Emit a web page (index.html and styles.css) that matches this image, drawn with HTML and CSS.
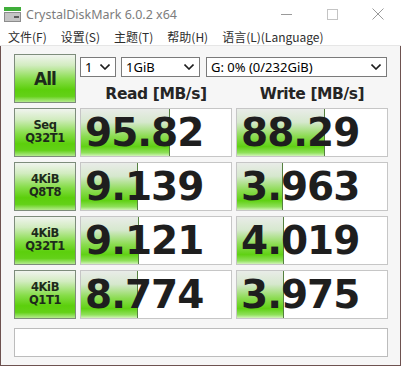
FILE: index.html
```html
<!DOCTYPE html>
<html>
<head>
  <meta charset="utf-8">
  <title>CrystalDiskMark 6.0.2 x64</title>
  <link rel="stylesheet" href="styles.css">
</head>
<body>
<div class="window">
  <div class="titlebar">
    <svg class="app-icon" width="17" height="15" viewBox="0 0 17 15">
      <rect x="0" y="0" width="17" height="4" fill="#3fae3a"/>
      <rect x="0" y="5" width="17" height="10" fill="#8c8c8c"/>
      <rect x="1" y="6" width="15" height="8" fill="#c4c4c4"/>
      <rect x="10" y="9" width="5" height="2" fill="#5c5c5c"/>
    </svg>
    <span class="title">CrystalDiskMark 6.0.2 x64</span>
    <div class="controls">
      <span class="ctl"><svg width="11" height="11" viewBox="0 0 11 11"><path d="M0 5.5 H11" stroke="#9a9a9a" stroke-width="1"/></svg></span>
      <span class="ctl"><svg width="11" height="11" viewBox="0 0 11 11"><rect x="0.5" y="0.5" width="10" height="10" fill="none" stroke="#c4c4c4" stroke-width="1"/></svg></span>
      <span class="ctl"><svg width="12" height="12" viewBox="0 0 12 12"><path d="M0.5 0.5 L11.5 11.5 M11.5 0.5 L0.5 11.5" stroke="#9a9a9a" stroke-width="1"/></svg></span>
    </div>
  </div>

  <div class="menubar">
    <span>文件(F)</span>
    <span>设置(S)</span>
    <span>主题(T)</span>
    <span>帮助(H)</span>
    <span>语言(L)(Language)</span>
  </div>

  <div class="content">
    <div class="grid">
      <button class="all">All</button>
      <div class="top">
        <div class="selects">
          <div class="select s-count">1 <svg width="10" height="6" viewBox="0 0 10 6"><path d="M0.5 0.5 L5 5 L9.5 0.5" fill="none" stroke="#1e1e1e" stroke-width="1.6"/></svg></div>
          <div class="select s-size">1GiB <svg width="10" height="6" viewBox="0 0 10 6"><path d="M0.5 0.5 L5 5 L9.5 0.5" fill="none" stroke="#1e1e1e" stroke-width="1.6"/></svg></div>
          <div class="select s-drive">G: 0% (0/232GiB) <svg width="10" height="6" viewBox="0 0 10 6"><path d="M0.5 0.5 L5 5 L9.5 0.5" fill="none" stroke="#1e1e1e" stroke-width="1.6"/></svg></div>
        </div>
        <div class="heads">
          <span>Read [MB/s]</span>
          <span>Write [MB/s]</span>
        </div>
      </div>

      <div class="label">Seq<br>Q32T1</div>
      <div class="cell"><div class="bar" style="width:58.7%"></div><span class="num">95.82</span></div>
      <div class="cell"><div class="bar" style="width:58%"></div><span class="num">88.29</span></div>

      <div class="label">4KiB<br>Q8T8</div>
      <div class="cell"><div class="bar" style="width:37.3%"></div><span class="num">9.139</span></div>
      <div class="cell"><div class="bar" style="width:30%"></div><span class="num">3.963</span></div>

      <div class="label">4KiB<br>Q32T1</div>
      <div class="cell"><div class="bar" style="width:38%"></div><span class="num">9.121</span></div>
      <div class="cell"><div class="bar" style="width:30.7%"></div><span class="num">4.019</span></div>

      <div class="label">4KiB<br>Q1T1</div>
      <div class="cell"><div class="bar" style="width:37.3%"></div><span class="num">8.774</span></div>
      <div class="cell"><div class="bar" style="width:30.7%"></div><span class="num">3.975</span></div>
    </div>
    <div class="comment"></div>
  </div>
</div>
</body>
</html>
```

FILE: styles.css
```css
body { margin: 0; background: #fff; font-family: "Noto Sans", sans-serif; }

.window { width: 401px; }

.titlebar { display: flex; align-items: center; height: 28px; }
.app-icon { margin-left: 4px; }
.title { margin-left: 5px; font-size: 12.5px; color: #7c7c7c; }
.controls { margin-left: auto; display: flex; }
.ctl { width: 46px; height: 28px; display: flex; align-items: center; justify-content: center; }

.menubar {
  display: flex;
  align-items: center;
  gap: 14px;
  height: 17px;
  padding-left: 8px;
  border-bottom: 1px solid #e6e6e6;
  font: 12px "Noto Sans CJK SC", sans-serif;
  color: #2e2e2e;
}

.content {
  background: #f6f6f6;
  border: 1px solid #6e5250;
  border-top: 0;
  padding: 8px 12px 8px 13px;
}

.grid {
  display: grid;
  grid-template-columns: 62px 152px 152px;
  grid-auto-rows: 49px;
  gap: 5px 4px;
}

.all, .label {
  border: 1px solid #7d8c7b;
  background: linear-gradient(#f0f4ee 0%, #d2ecc0 22%, #86dd48 52%, #5ccf0c 74%, #63d118 88%, #b4ea8e 100%);
  color: #1d2a1b;
  font-family: "DejaVu Sans", sans-serif;
  font-weight: bold;
}
.all { padding: 0; font-size: 17px; letter-spacing: -1px; }
.label {
  display: flex;
  flex-direction: column;
  align-items: center;
  justify-content: center;
  padding-bottom: 2px;
  font-size: 11.5px;
  line-height: 12.5px;
  letter-spacing: -0.4px;
  text-align: center;
}

.top { grid-column: span 2; display: flex; flex-direction: column; }
.selects { display: flex; margin-top: 3px; height: 20px; }
.select {
  box-sizing: border-box;
  display: flex;
  align-items: center;
  justify-content: space-between;
  padding: 0 5px 0 4px;
  border: 1px solid #7a7a7a;
  background: #fff;
  font-size: 13px;
  color: #000;
}
.s-count { width: 36px; }
.s-size { width: 79px; margin-left: 5px; }
.s-drive { width: 181px; margin-left: 6px; }

.heads {
  flex: 1;
  display: grid;
  grid-template-columns: 152px 152px;
  gap: 4px;
  align-items: end;
  text-align: center;
  font: bold 15.5px/18px "DejaVu Sans", sans-serif;
  letter-spacing: -0.4px;
  color: #252525;
}

.cell {
  position: relative;
  display: flex;
  align-items: center;
  padding-left: 4px;
  background: #fff;
  border: 1px solid #c6c6c6;
}
.bar {
  position: absolute;
  left: 0; top: 0; bottom: 0;
  background: linear-gradient(#e9ece8 0%, #d6e8ce 28%, #8cdc52 58%, #60d114 80%, #8fe05a 93%, #d2f3ba 100%);
  border-right: 1px solid #55803f;
}
.num {
  position: relative;
  font: bold 39px/39px "DejaVu Sans", sans-serif;
  letter-spacing: -1px;
  color: #1e1e1e;
}

.comment {
  box-sizing: border-box;
  margin-top: 9px;
  height: 29px;
  width: 374px;
  background: #fff;
  border: 1px solid #bcbcbc;
}
```
